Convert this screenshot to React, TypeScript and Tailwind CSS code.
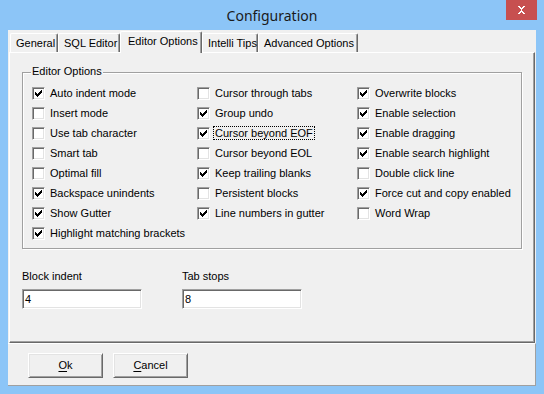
import React from "react";

const font = { fontFamily: '"Liberation Sans", Arial, sans-serif' };

function Check() {
  // classic 7x7 check mark, drawn pixel by pixel
  const px = [
    [6, 0], [5, 1], [6, 1], [0, 2], [4, 2], [5, 2], [6, 2],
    [0, 3], [1, 3], [3, 3], [4, 3], [5, 3],
    [0, 4], [1, 4], [2, 4], [3, 4], [4, 4],
    [1, 5], [2, 5], [3, 5], [2, 6],
  ];
  return (
    <svg width="7" height="7" viewBox="0 0 7 7" shapeRendering="crispEdges" className="block">
      {px.map(([x, y]) => (
        <rect key={`${x}-${y}`} x={x} y={y} width="1" height="1" fill="#000" />
      ))}
    </svg>
  );
}

function CheckBox({ label, checked, focused }: { label: string; checked?: boolean; focused?: boolean }) {
  return (
    <div className="flex h-[20px] items-center">
      <div className="flex h-[13px] w-[13px] shrink-0 items-center justify-center border border-t-[#a0a0a0] border-l-[#a0a0a0] border-r-white border-b-white bg-white shadow-[inset_1px_1px_0_#696969,inset_-1px_-1px_0_#e3e3e3]">
        {checked && <Check />}
      </div>
      {focused ? (
        <span className="ml-[3px] border border-dotted border-black px-[1px] leading-[12px]">{label}</span>
      ) : (
        <span className="ml-[5px] leading-[13px]">{label}</span>
      )}
    </div>
  );
}

function Tab({ label, width, selected }: { label: string; width: number; selected?: boolean }) {
  if (selected) {
    return (
      <div
        className="relative z-10 -mb-[1px] flex h-[22px] items-start rounded-t-[2px] border-t border-l border-r border-t-white border-l-white border-r-[#696969] bg-[#f0f0f0] pl-[7px] pt-[1px] shadow-[inset_-1px_0_0_#a0a0a0]"
        style={{ width }}
      >
        {label}
      </div>
    );
  }
  return (
    <div
      className="flex h-[19px] items-start rounded-t-[2px] border-t border-l border-r border-t-white border-l-white border-r-[#696969] pl-[5px] pt-[1px] shadow-[inset_-1px_0_0_#a0a0a0]"
      style={{ width }}
    >
      {label}
    </div>
  );
}

function Field({ label, value }: { label: string; value: string }) {
  return (
    <div className="w-[160px]">
      <div className="leading-[13px]">{label}</div>
      <div className="mt-[6px] flex h-[20px] w-[120px] items-center border border-t-[#a0a0a0] border-l-[#a0a0a0] border-r-white border-b-white bg-white pl-[2px] shadow-[inset_1px_1px_0_#696969,inset_-1px_-1px_0_#e3e3e3]">
        {value}
      </div>
    </div>
  );
}

function Button({ mnemonic, rest }: { mnemonic: string; rest: string }) {
  return (
    <div className="flex h-[25px] w-[75px] items-center justify-center border border-t-white border-l-white border-r-[#696969] border-b-[#696969] bg-[#f0f0f0] shadow-[inset_1px_1px_0_#e3e3e3,inset_-1px_-1px_0_#a0a0a0]">
      <span>
        <span className="underline underline-offset-[2px]">{mnemonic}</span>
        {rest}
      </span>
    </div>
  );
}

export default function App() {
  const col1 = [
    { label: "Auto indent mode", checked: true },
    { label: "Insert mode" },
    { label: "Use tab character" },
    { label: "Smart tab" },
    { label: "Optimal fill" },
    { label: "Backspace unindents", checked: true },
    { label: "Show Gutter", checked: true },
    { label: "Highlight matching brackets", checked: true },
  ];
  const col2 = [
    { label: "Cursor through tabs" },
    { label: "Group undo", checked: true },
    { label: "Cursor beyond EOF", checked: true, focused: true },
    { label: "Cursor beyond EOL" },
    { label: "Keep trailing blanks", checked: true },
    { label: "Persistent blocks" },
    { label: "Line numbers in gutter", checked: true },
  ];
  const col3 = [
    { label: "Overwrite blocks", checked: true },
    { label: "Enable selection", checked: true },
    { label: "Enable dragging", checked: true },
    { label: "Enable search highlight", checked: true },
    { label: "Double click line" },
    { label: "Force cut and copy enabled", checked: true },
    { label: "Word Wrap" },
  ];

  return (
    <div className="flex h-[394px] w-[544px] flex-col overflow-hidden bg-[#8cc5f7]">
      {/* Title bar */}
      <div className="relative flex h-[30px] shrink-0 items-center justify-center">
        <span className="text-[14px] text-[#1a1a1a]" style={{ fontFamily: '"Noto Sans", "Open Sans", sans-serif' }}>
          Configuration
        </span>
        <div className="absolute right-[7px] top-0 flex h-[20px] w-[31px] items-center justify-center bg-[#c75050]">
          <svg width="9" height="8" viewBox="0 0 9 8" shapeRendering="crispEdges">
            <path d="M1 0h2v1h1v1h1V1h1V0h2v1H7v1H6v1H5v2h1v1h1v1h1v1H6V7H5V6H4v1H3v1H1V7h1V6h1V5h1V3H3V2H2V1H1z" fill="#fff" />
          </svg>
        </div>
      </div>

      {/* Client area */}
      <div className="mx-[8px] flex h-[356px] flex-col bg-[#f0f0f0] text-[11px] text-black" style={font}>
        {/* Tabs */}
        <div className="flex h-[22px] shrink-0 items-end pl-[2px]">
          <Tab label="General" width={48} />
          <Tab label="SQL Editor" width={62} />
          <Tab label="Editor Options" width={82} selected />
          <Tab label="Intelli Tips" width={56} />
          <Tab label="Advanced Options" width={100} />
        </div>

        {/* Tab page */}
        <div className="ml-[1px] h-[291px] w-[526px] border border-t-white border-l-white border-r-[#696969] border-b-[#696969] pl-[12px] pt-[19px] shadow-[inset_-1px_-1px_0_#a0a0a0]">
          <div className="relative h-[177px] w-[500px] border border-[#a0a0a0] shadow-[inset_1px_1px_0_#fff,1px_1px_0_#fff]">
            <span className="absolute -top-[8px] left-[8px] bg-[#f0f0f0] px-[1px] leading-[13px]">Editor Options</span>
            <div className="flex pl-[9px] pt-[10px]">
              <div className="flex w-[165px] flex-col">
                {col1.map((c) => (
                  <CheckBox key={c.label} {...c} />
                ))}
              </div>
              <div className="flex w-[160px] flex-col">
                {col2.map((c) => (
                  <CheckBox key={c.label} {...c} />
                ))}
              </div>
              <div className="flex flex-col">
                {col3.map((c) => (
                  <CheckBox key={c.label} {...c} />
                ))}
              </div>
            </div>
          </div>

          <div className="mt-[21px] flex">
            <Field label="Block indent" value="4" />
            <Field label="Tab stops" value="8" />
          </div>
        </div>

        {/* Buttons */}
        <div className="flex flex-1 gap-[10px] border-t border-r border-b border-t-white border-r-[#a0a0a0] border-b-[#a0a0a0] pl-[20px] pt-[9px]">
          <Button mnemonic="O" rest="k" />
          <Button mnemonic="C" rest="ancel" />
        </div>
      </div>
    </div>
  );
}
